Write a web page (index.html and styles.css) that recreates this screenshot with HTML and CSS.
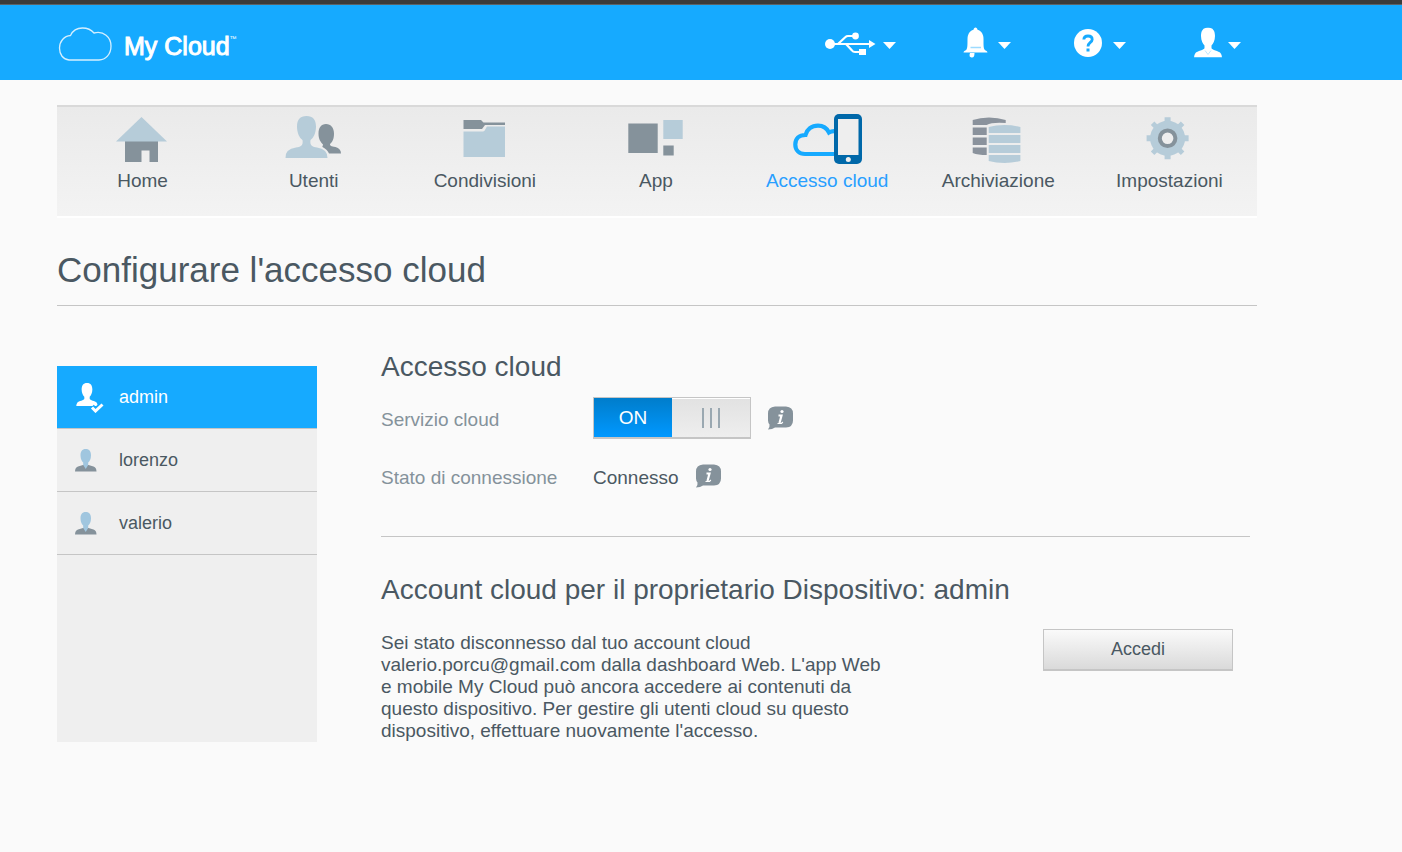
FILE: index.html
```html
<!DOCTYPE html>
<html lang="it">
<head>
    <meta charset="UTF-8">
    <meta name="viewport" content="width=device-width, initial-scale=1.0">
    <title>My Cloud - Accesso cloud</title>
    <link rel="stylesheet" href="styles.css">
</head>
<body>
    <!-- Shared shapes -->
    <svg width="0" height="0" class="sprite" aria-hidden="true">
        <symbol id="caret" viewBox="0 0 13 7"><path d="M0 0H13L6.5 7Z" fill="#fff"/></symbol>
        <symbol id="person" viewBox="0 0 28 30">
            <path d="M14 0C9 0 7 3.5 7 8.5C7 13 9 16.500 10.500 18V20.500C10.500 22.500 3 23.500 1.500 25.500Q0 27.500 0 30H28Q28 27.500 26.500 25.500C25 23.500 17.500 22.500 17.500 20.500V18C19 16.500 21 13 21 8.500C21 3.500 19 0 14 0Z"/>
        </symbol>
        <symbol id="user" viewBox="0 0 22 23">
            <path d="M0 22.500Q0 18.500 3 17.500L8 16H13.500L18.500 17.500Q21.500 18.500 21.500 22.500Z" fill="#85929b"/>
            <path d="M10.700 0C7 0 5.500 2.500 5.500 6.500C5.500 10 7 12.500 8.200 13.500V16L10.700 20L13.200 16V13.500C14.500 12.500 16 10 16 6.500C16 2.500 14.500 0 10.700 0Z" fill="#a0c6df"/>
        </symbol>
        <symbol id="info" viewBox="0 0 26 24">
            <path d="M7 0.500H18Q25 1 25 7.500V14.500Q25 21 18 21.500H7Q4.500 23.500 0 23.500Q2 21.500 1.500 18.500Q0 16.500 0 14.500V7.500Q0 1 7 0.500Z" fill="#85929b"/>
            <circle cx="14" cy="5.500" r="1.600" fill="#fff"/>
            <path d="M10.500 9.500H13.500L11.500 17" fill="none" stroke="#fff" stroke-width="2.200"/>
            <path d="M9.500 17.500H13.500L14.800 16" fill="none" stroke="#fff" stroke-width="1.200"/>
        </symbol>
    </svg>

    <header class="topbar">
        <div class="topbar-inner">
            <a href="#" class="logo">
                <svg width="54" height="35" viewBox="0 0 54 35" fill="none" stroke="#d5efff" stroke-width="1.3">
                    <path d="M11 34C5 33.500 1.500 28.500 1.500 22C1.500 15.500 6 10 12.500 9.500C14.500 5 19 2 24.500 2C29.500 2 33.500 4 36 7C45.500 4.500 53 11 53 20C53 28.500 47.500 34 41 34Z"/>
                </svg>
                <span class="logo-text">My Cloud</span><sup>™</sup>
            </a>
            <div class="tools">
                <button type="button" class="tool" aria-label="USB">
                    <svg width="56" height="32" viewBox="0 0 56 32" fill="#fff">
                        <circle cx="7" cy="18" r="5"/>
                        <path d="M7 18H47M15 18L22.500 11Q23.500 10 25 10H31M23 18L29 24.500Q30 26 32 26H38" fill="none" stroke="#fff" stroke-width="2.200"/>
                        <path d="M46 14L52.500 18L46 22Z"/>
                        <circle cx="32.500" cy="10" r="3.400"/>
                        <rect x="36" y="23" width="7" height="6"/>
                    </svg>
                    <svg class="caret" width="13" height="7"><use href="#caret"/></svg>
                </button>
                <button type="button" class="tool" aria-label="Avvisi">
                    <svg width="56" height="32" viewBox="0 0 56 32" fill="#fff">
                        <path d="M37.500 1.500C38.500 1.500 39.500 2.500 39.500 3.800C43.500 5 45.500 8.500 45.500 13C45.500 19 45.500 22 46.500 23.500C47 24.500 49.500 25 49.500 26.500H25.500C25.500 25 28 24.500 28.500 23.500C29.500 22 29.500 19 29.500 13C29.500 8.500 31.500 5 35.500 3.800C35.500 2.500 36.500 1.500 37.500 1.500Z"/>
                        <path d="M32 27H36.500Q36.500 32 33.500 31.500Q30.500 31 32 27Z"/>
                        <path d="M32.500 21.500H43" stroke="#9cdbff" stroke-width="1.500"/>
                    </svg>
                    <svg class="caret" width="13" height="7"><use href="#caret"/></svg>
                </button>
                <button type="button" class="tool" aria-label="Guida">
                    <svg width="56" height="32" viewBox="0 0 56 32" fill="none">
                        <circle cx="35" cy="17" r="14" fill="#fff"/>
                        <path d="M30.800 13.500Q31 10 35 10Q39.200 10 39.200 13.500C39.200 16.500 35 16.500 35 20.500" stroke="#16aaff" stroke-width="2.800"/>
                        <rect x="33.500" y="22.500" width="3" height="3" fill="#16aaff"/>
                    </svg>
                    <svg class="caret" width="13" height="7"><use href="#caret"/></svg>
                </button>
                <button type="button" class="tool" aria-label="Utente">
                    <svg width="56" height="32" viewBox="0 0 56 32" fill="#fff">
                        <use href="#person" x="26" y="1.500" width="28" height="30"/>
                        <path d="M37 24.500L40 28.500L43 24.500" fill="none" stroke="#bfe7ff"/>
                    </svg>
                    <svg class="caret" width="13" height="7"><use href="#caret"/></svg>
                </button>
            </div>
        </div>
    </header>

    <div class="container">
        <nav class="main-nav">
            <a href="#">
                <svg width="80" height="54" viewBox="0 0 80 54">
                    <path d="M22 29H55V50H46.500V38.500H38.500V50H22Z" fill="#85929b"/>
                    <path d="M38.500 5L64 29.500H13Z" fill="#b6ccd9"/>
                </svg>
                Home
            </a>
            <a href="#">
                <svg width="80" height="54" viewBox="0 0 80 54">
                    <path d="M52 12C47 12 44.500 16 44.500 21.500C44.500 27 46.500 30 49 32.500C49 34 48 34 48.500 35C52 37 54 39 55 41.500H67Q67 36.500 61.500 35C57 34 56 34 56 32C58.500 30 60 27 60 21.500C60 16 57 12 52 12Z" fill="#85929b"/>
                    <path d="M32.500 4C26 4 23 8 23 14.500C23 21 25.500 26 28.500 28C29.500 34 26 35 22 35.500Q11 37 11.500 46H53.500Q53.500 37 43 35.500C39 35 35.500 34 36.500 28C39.500 26 42 21 42 14.500C42 8 39 4 32.500 4Z" fill="#b6ccd9"/>
                </svg>
                Utenti
            </a>
            <a href="#">
                <svg width="80" height="54" viewBox="0 0 80 54">
                    <path d="M18.500 8H36L38.500 10.500H60V13H40L37 17H18.500Z" fill="#85929b"/>
                    <path d="M18.500 19.500H38Q39.500 19.500 40.500 17L42 14.500H60V45H18.500Z" fill="#b6ccd9"/>
                </svg>
                Condivisioni
            </a>
            <a href="#">
                <svg width="80" height="54" viewBox="0 0 80 54">
                    <path d="M12.300 11.500H41.700V41H12.300ZM47.300 33.500H57.700V43.500H47.300Z" fill="#85929b"/>
                    <path d="M47.300 8H66.700V27H47.300Z" fill="#b6ccd9"/>
                </svg>
                App
            </a>
            <a href="#" class="active">
                <svg width="80" height="54" viewBox="0 0 80 54">
                    <path d="M50 42H18C12 42 8.300 38 8.300 32.500C8.300 26.500 12 23 18.500 23C20 17.500 24.500 13.700 31 13.700C36.500 13.700 40 16.500 42 20.500Q45.500 18.500 50 19.500" fill="none" stroke="#16aaff" stroke-width="4.200"/>
                    <rect x="47" y="2" width="28" height="50" rx="5" fill="#0068a9"/>
                    <rect x="51" y="7" width="20.500" height="36" fill="#eee"/>
                    <circle cx="61.300" cy="47.500" r="2.500" fill="#eee"/>
                </svg>
                Accesso cloud
            </a>
            <a href="#">
                <svg width="80" height="54" viewBox="0 0 80 54">
                    <path d="M14.700 8Q22 5.500 31 5.500T47.700 8V11Q34 10 28.700 13H14.700ZM14.700 15.500H28.700V23H14.700ZM14.700 25.500H28.700V33H14.700ZM14.700 35.500H28.700V43Q20 43 14.700 41Z" fill="#8a929c"/>
                    <path d="M30.700 15Q38 13 46.500 13T62.400 15V21H30.700ZM30.700 23H62.400V31H30.700ZM30.700 33H62.400V41H30.700ZM30.700 43H62.400V49Q55 51 46.500 51T30.700 49Z" fill="#b6ccd9"/>
                </svg>
                Archiviazione
            </a>
            <a href="#">
                <svg width="80" height="54" viewBox="0 0 80 54">
                    <g fill="none" stroke="#b6ccd9" stroke-width="6">
                        <path d="M38.600 5.300V47.300M17.600 26.300H59.600"/>
                        <path d="M23.600 11.300L53.600 41.300M53.600 11.300L23.600 41.300" stroke-width="5"/>
                    </g>
                    <circle cx="38.600" cy="26.300" r="17.500" fill="#b6ccd9"/>
                    <circle cx="38.600" cy="26.300" r="7.800" fill="#eee" stroke="#85929b" stroke-width="4"/>
                </svg>
                Impostazioni
            </a>
        </nav>

        <h1>Configurare l'accesso cloud</h1>

        <div class="content">
            <aside class="users">
                <a href="#" class="user selected">
                    <svg width="30" height="32" viewBox="0 0 30 32" fill="#fff">
                        <use href="#person" x="1" y="2" width="22" height="23"/>
                        <path d="M17 25.500L20.500 29L27.500 22.500" fill="none" stroke="#16aaff" stroke-width="5"/>
                        <path d="M17 26.500L20.500 30L27.500 23.500" fill="none" stroke="#fff" stroke-width="3"/>
                    </svg>
                    admin
                </a>
                <a href="#" class="user">
                    <svg width="30" height="32" viewBox="0 0 30 32"><use href="#user" x="0" y="5" width="22" height="23"/></svg>
                    lorenzo
                </a>
                <a href="#" class="user">
                    <svg width="30" height="32" viewBox="0 0 30 32"><use href="#user" x="0" y="5" width="22" height="23"/></svg>
                    valerio
                </a>
            </aside>

            <main class="panel">
                <section class="settings">
                    <h2>Accesso cloud</h2>
                    <div class="row">
                        <label class="row-label" for="cloudService">Servizio cloud</label>
                        <label class="switch">
                            <input type="checkbox" id="cloudService" checked>
                            <span class="switch-on">ON</span>
                            <span class="switch-knob"><i></i><i></i><i></i></span>
                        </label>
                        <svg class="info" width="26" height="24"><use href="#info"/></svg>
                    </div>
                    <div class="row">
                        <span class="row-label">Stato di connessione</span>
                        <span class="row-value">Connesso</span>
                        <svg class="info" width="26" height="24"><use href="#info"/></svg>
                    </div>
                </section>

                <section class="account">
                    <h2>Account cloud per il proprietario Dispositivo: admin</h2>
                    <div class="account-body">
                        <p>Sei stato disconnesso dal tuo account cloud valerio.porcu@gmail.com dalla dashboard Web. L'app Web e mobile My Cloud può ancora accedere ai contenuti da questo dispositivo. Per gestire gli utenti cloud su questo dispositivo, effettuare nuovamente l'accesso.</p>
                        <button type="button" class="btn">Accedi</button>
                    </div>
                </section>
            </main>
        </div>
    </div>
</body>
</html>
```
FILE: styles.css
```css
* {
    box-sizing: border-box;
}

body {
    margin: 0;
    background: #fafafa;
    color: #4a5862;
    font-family: Arial, "Liberation Sans", sans-serif;
    font-size: 19px;
    line-height: 22px;
}

a {
    color: inherit;
    text-decoration: none;
}

svg {
    display: block;
    flex-shrink: 0;
}

.sprite {
    position: absolute;
}

/* top bar */
.topbar {
    background: #16aaff;
    border-top: 4px solid #3b3b3b;
    box-shadow: inset 0 1px 0 #5c6266;
}

.topbar-inner,
.container {
    max-width: 1200px;
    margin-left: 57px;
}

.topbar-inner {
    display: flex;
    align-items: center;
    justify-content: space-between;
    height: 76px;
    padding-right: 16px;
}

.logo {
    display: flex;
    align-items: center;
    padding: 2px 0 0 1px;
    color: #fff;
    font-size: 25px;
}

.logo-text {
    margin-left: 12px;
    padding-top: 6px;
    -webkit-text-stroke: 1px #fff;
}

.logo sup {
    align-self: flex-start;
    font-size: 7px;
    line-height: 26px;
}

.tools {
    display: flex;
}

.tool {
    display: flex;
    align-items: center;
    justify-content: flex-end;
    gap: 4px;
    width: 115px;
    padding: 0;
    border: none;
    background: none;
    cursor: pointer;
}

.caret {
    margin-top: 6px;
}

/* navigation */
.main-nav {
    display: grid;
    grid-template-columns: repeat(7, 1fr);
    margin-top: 25px;
    padding: 5px 2px 24px 0;
    background: linear-gradient(#eaeaea, #f3f3f3);
    border-top: 2px solid #d9d9d9;
    border-bottom: 2px solid #fff;
}

.main-nav a {
    display: flex;
    flex-direction: column;
    align-items: center;
    gap: 4px;
}

.main-nav .active {
    color: #289fff;
}

h1 {
    margin: 0;
    padding: 32px 0 15px;
    border-bottom: 1px solid #c5c5c5;
    font-size: 35px;
    font-weight: normal;
    line-height: 40px;
}

h2 {
    margin: 0;
    font-size: 28px;
    font-weight: normal;
    line-height: 32px;
}

/* content */
.content {
    display: flex;
    gap: 64px;
    padding-right: 7px;
}

.users {
    flex: 0 0 260px;
    min-height: 375px;
    margin-top: 60px;
    background: #efefef;
}

.user {
    display: flex;
    align-items: center;
    gap: 14px;
    height: 63px;
    padding-left: 18px;
    border-bottom: 1px solid #c5c5c5;
    font-size: 18px;
}

.user.selected {
    background: #16aaff;
    color: #fff;
}

.panel {
    flex: 1;
    padding-top: 45px;
}

.settings {
    padding-bottom: 37px;
    border-bottom: 1px solid #c5c5c5;
}

.row {
    display: flex;
    align-items: center;
    height: 46px;
    margin-top: 12px;
}

.row-label,
.row-value {
    padding-top: 4px;
}

.row-label {
    width: 212px;
    color: #85929b;
}

.info {
    margin-left: 17px;
}

.switch {
    position: relative;
    display: flex;
    width: 158px;
    height: 42px;
    border: 1px solid #c5c5c5;
    border-bottom-width: 2px;
    cursor: pointer;
}

.switch input {
    position: absolute;
    inset: 0;
    width: 100%;
    height: 100%;
    margin: 0;
    opacity: 0;
}

.switch-on,
.switch-knob {
    display: flex;
    flex: 1;
    align-items: center;
    justify-content: center;
}

.switch-on {
    background: linear-gradient(#007dcb, #0098ff);
    color: #fff;
}

.switch-knob {
    gap: 6px;
    background: linear-gradient(#e2e2e2, #eee);
    border-top: 1px solid #fff;
}

.switch-knob i {
    width: 2px;
    height: 20px;
    background: #9aa8b1;
}

.account {
    padding-top: 37px;
}

.account-body {
    display: flex;
    align-items: flex-start;
    justify-content: space-between;
    padding: 23px 17px 0 0;
}

.account-body p {
    max-width: 500px;
    margin: 3px 0 0;
}

.btn {
    width: 190px;
    height: 42px;
    border: 1px solid #c5c5c5;
    border-bottom-width: 2px;
    background: linear-gradient(#fafafa, #dadada);
    color: inherit;
    font-family: inherit;
    font-size: 18px;
    cursor: pointer;
}
```
